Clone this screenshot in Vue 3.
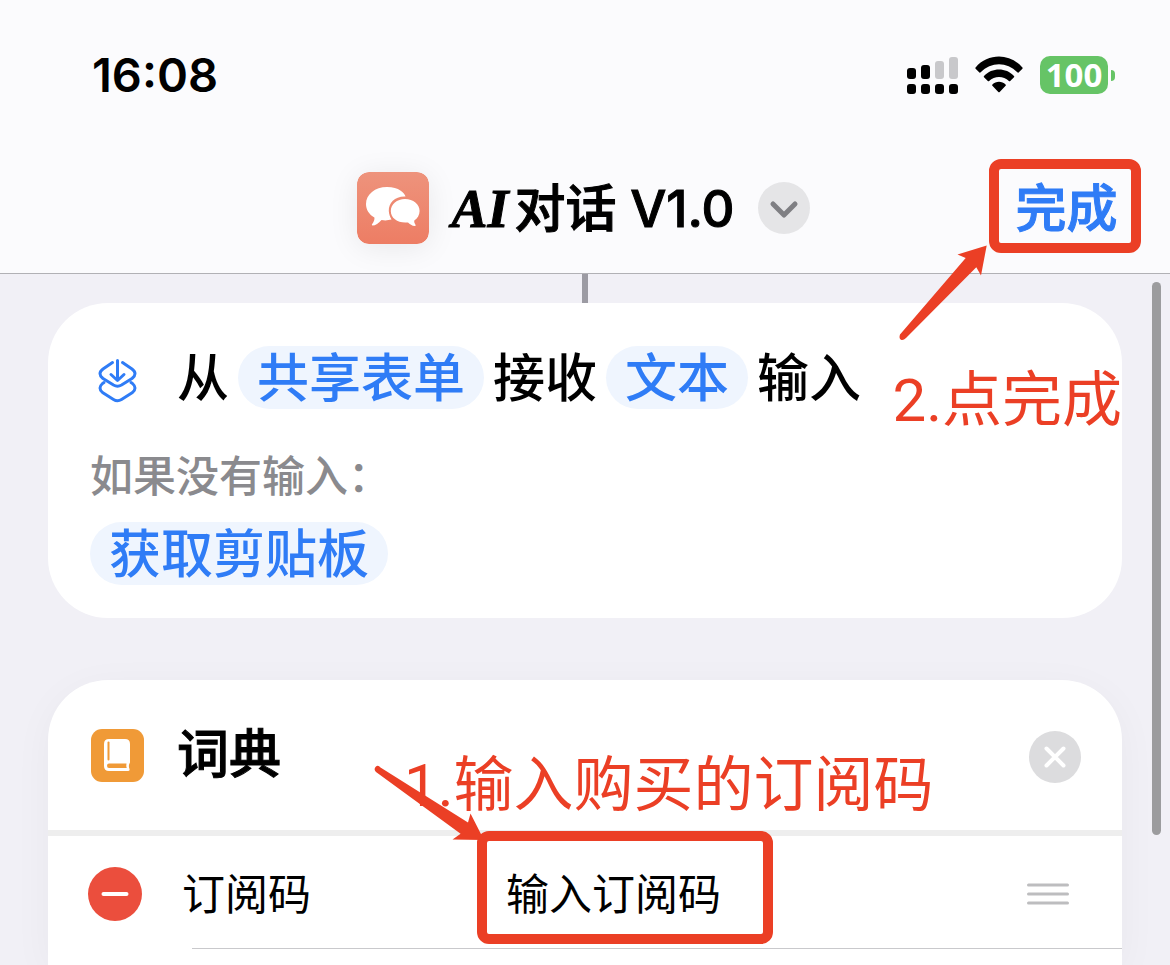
<template>
  <div class="screen">

    <header class="topbar">
      <!-- Status bar -->
      <div class="status">
        <span class="time">16:08</span>
        <div class="status-icons">
          <svg class="signal" width="52" height="38" viewBox="0 0 52 38">
            <rect x="0" y="12" width="9" height="11" rx="3" />
            <rect x="14" y="9" width="9" height="14" rx="3" />
            <rect class="off" x="28" y="5" width="9" height="18" rx="3" />
            <rect class="off" x="42" y="1" width="9" height="22" rx="3" />
            <rect v-for="x in [0, 14, 28, 42]" :key="x" :x="x" y="28" width="9" height="10" rx="3" />
          </svg>
          <svg class="wifi" width="48" height="38" viewBox="0 0 48 38">
            <path d="M0.6 11.4C13-3 35-3 47.4 11.4Q48 12 47.4 12.8L43.6 16.4Q43 17 42.3 16.3C32 5.600 16 5.600 5.700 16.300Q5 17 4.400 16.400L0.600 12.800Q0 12 0.600 11.400Z" />
            <path d="M9 20C17 11.400 31 11.400 39 20Q39.600 20.700 39 21.300L35.200 25Q34.600 25.600 33.900 25C28.500 19.500 19.500 19.500 14.100 25Q13.400 25.600 12.800 25L9 21.300Q8.400 20.700 9 20Z" />
            <path d="M17.400 28.400C21 24.800 27 24.800 30.600 28.400Q31.300 29.100 30.600 29.800L24.700 36Q24 36.700 23.300 36L17.400 29.800Q16.700 29.100 17.400 28.400Z" />
          </svg>
          <div class="battery">
            <span class="battery-level">100</span>
            <span class="battery-cap"></span>
          </div>
        </div>
      </div>

      <!-- Title -->
      <div class="titlebar">
        <div class="title">
          <svg class="app-icon" width="72" height="72" viewBox="0 0 72 72">
            <defs>
              <linearGradient id="coral" x1="0" y1="0" x2="0" y2="1">
                <stop offset="0" stop-color="#ee937c" />
                <stop offset="1" stop-color="#ed7d64" />
              </linearGradient>
            </defs>
            <rect width="72" height="72" rx="12" fill="url(#coral)" />
            <path fill="#fff" d="M30 15C42 15 47.500 21 48.500 24.500C38 24 31.500 31 31.800 39C32 42 33 45 34.500 47.600Q29 49 24.500 48C21.500 51.500 18.500 53.500 15.500 53.600Q14.200 53.400 15.200 52C17 49.500 17.700 47.500 17.400 45.500C12 42.500 9 37.500 9 32C9 22.500 18 15 30 15Z" />
            <path fill="#fff" d="M48 27C56.300 27 62.600 32.300 62.600 39C62.600 43 60.500 46.300 57.300 48.600C57 50.300 57.600 51.600 58.600 52.900Q59 54.100 57.800 54C55 53.600 52.800 52.300 51 50.400C41.500 51.600 33.800 46.500 33.800 39C33.800 32.300 40 27 48 27Z" />
          </svg>
          <h1 class="name"><i>AI</i>对话 V1.0</h1>
          <button class="round chevron" aria-label="展开">
            <svg width="52" height="52" viewBox="0 0 52 52">
              <path d="M15 22L26 33L37 22" />
            </svg>
          </button>
        </div>
        <button class="done">完成</button>
      </div>
    </header>

    <main class="content">
      <div class="connector"></div>

      <!-- Receive input -->
      <section class="card receive">
        <div class="sentence">
          <svg class="row-icon layers" width="54" height="54" viewBox="0 0 54 54">
            <path d="M22.500 11.500L13 18Q7 22.500 13 27.500L23.500 34Q27.500 36.300 31.500 34L42 27.500Q48 22.500 42 18L32.500 11.500" />
            <path d="M14 31.500L12.500 32.500Q7.500 37 12.500 41.500L23.500 48.500Q27.500 51 31.500 48.500L42.500 41.500Q47.500 37 42.500 32.500L41 31.500" />
            <path d="M27.500 9.500V29M21 23.500L27.500 29.500L34 23.500" />
          </svg>
          <span class="word">从</span>
          <button class="token">共享表单</button>
          <span class="word">接收</span>
          <button class="token">文本</button>
          <span class="word">输入</span>
        </div>
        <p class="hint">如果没有输入：</p>
        <button class="token">获取剪贴板</button>
        <span class="note note-done">2.点完成</span>
      </section>

      <!-- Dictionary -->
      <section class="card dictionary">
        <div class="card-head">
          <svg class="row-icon" width="54" height="54" viewBox="0 0 54 54">
            <rect x="1" y="1" width="53" height="53" rx="11" fill="#f09a37" />
            <path fill="#fff" d="M19 11H35Q40 11 40 16V34.500Q38 37.500 39.500 41Q40 43 38 43H19Q14 43 14 38V16Q14 11 19 11Z" />
            <path fill="none" stroke="#f09a37" stroke-width="2" stroke-linecap="round" d="M18.500 14.500V31.500" />
            <path fill="#f09a37" d="M19 35.500H36.500Q36 37.500 36.700 40H19Q17 40 17 37.800Q17 35.500 19 35.500Z" />
          </svg>
          <h2>词典</h2>
          <button class="round close" aria-label="关闭">
            <svg width="52" height="52" viewBox="0 0 52 52">
              <path d="M17.500 17.500L34.500 34.500M34.500 17.500L17.500 34.500" />
            </svg>
          </button>
        </div>
        <div class="entry">
          <button class="round remove" aria-label="删除">
            <svg width="54" height="54" viewBox="0 0 54 54">
              <path d="M15.500 27H38.500" />
            </svg>
          </button>
          <label for="code">{{ entryKey }}</label>
          <div class="field">
            <input id="code" v-model="code" type="text" />
            <span class="frame"></span>
          </div>
          <svg class="handle" width="42" height="22" viewBox="0 0 42 22">
            <path d="M1.500 2H40.500M1.500 11H40.500M1.500 20H40.500" />
          </svg>
        </div>
        <div class="divider"></div>
        <span class="note note-code">1.输入购买的订阅码</span>
        <svg class="arrow arrow-code" width="120" height="80" viewBox="0 0 120 80">
          <path d="M11.500 6.500Q9 3.500 6.500 6Q4.500 8.500 7 11L91.600 72.700L83.500 78.500L115 79L101.500 52.500L99 61.500Z" />
        </svg>
      </section>
    </main>

    <svg class="arrow arrow-done" width="100" height="104" viewBox="0 0 100 104">
      <path d="M11 93.500Q9.500 98.500 12.500 99Q14.500 99.500 17 97L87.300 26.300L92 34.500L97.700 4.500L68.500 13.500L76.700 17Z" />
    </svg>
    <div class="scrollbar"></div>
  </div>
</template>

<script setup>
import { ref } from 'vue'

const entryKey = '订阅码'
const code = ref('输入订阅码')
</script>

<style>
body { margin: 0; background: #f1f0f6; }
</style>

<style scoped>
.screen {
  position: relative;
  display: flex;
  flex-direction: column;
  min-height: 100vh;
  overflow: hidden;
  background: #f1f0f6;
  color: #000;
  font-family: Inter, "Noto Sans CJK SC", sans-serif;
  font-size: 52px;
  line-height: 60px;
  font-weight: 500;
}
.screen * { box-sizing: border-box; }

button {
  padding: 0;
  border: none;
  background: transparent;
  font: inherit;
  cursor: pointer;
}
h1, h2, p { margin: 0; }
svg { display: block; flex: none; }

/* top bar */
.topbar {
  padding: 48px 0 20px;
  background: #fbfbfd;
  border-bottom: 1px solid #b1b1b5;
}
.status {
  display: flex;
  justify-content: space-between;
  align-items: center;
  height: 54px;
  padding: 0 55px 0 92px;
}
.time { font-size: 47px; font-weight: 600; }
.status-icons { display: flex; align-items: center; }
.signal .off { fill: #c8c8cb; }
.wifi { margin: 0 17px 0 16px; }
.battery { display: flex; align-items: center; gap: 3px; }
.battery-level {
  width: 68px;
  border-radius: 10px;
  background: #66c466;
  color: #fff;
  font-family: "Noto Sans", sans-serif;
  font-size: 33px;
  line-height: 38px;
  font-weight: 700;
  text-align: center;
}
.battery-cap {
  width: 4px;
  height: 11px;
  border-radius: 0 5px 5px 0;
  background: #66c466;
}

.titlebar {
  display: grid;
  grid-template-columns: 1fr auto 1fr;
  align-items: center;
  margin-top: 57px;
  padding: 0 29px 0 25px;
}
.title {
  grid-column: 2;
  display: flex;
  align-items: center;
  gap: 23px;
  padding-top: 3px;
}
.app-icon {
  border-radius: 12px;
  box-shadow: 0 4px 30px rgba(0, 0, 0, 0.08);
}
.name {
  padding-top: 3px;
  font-size: 51px;
  font-weight: 500;
  -webkit-text-stroke: 1px #000;
  white-space: nowrap;
}
.name i {
  margin-right: 6px;
  font-family: "Liberation Serif", serif;
  font-size: 54px;
  font-weight: 700;
}
.done {
  justify-self: end;
  width: 152px;
  height: 94px;
  padding: 5px 0 0 3px;
  border: 10px solid #eb3f25;
  border-radius: 12px;
  color: #2f7cf6;
  font-size: 51px;
  -webkit-text-stroke: 1px #2f7cf6;
}

.round { border-radius: 50%; }
.round path {
  fill: none;
  stroke: #fff;
  stroke-width: 4;
  stroke-linecap: round;
  stroke-linejoin: round;
}
.chevron { background: #e5e5e7; }
.chevron path { stroke: #7f7f83; stroke-width: 5; }

/* cards */
.content {
  flex: 1;
  display: flex;
  flex-direction: column;
  padding: 0 48px;
}
.connector {
  align-self: center;
  width: 6px;
  height: 29px;
  background: #9c9ba3;
}
.card {
  position: relative;
  background: #fff;
  border-radius: 60px;
}
.receive {
  margin-bottom: 62px;
  padding: 43px 42px 33px;
}
.sentence {
  display: flex;
  align-items: center;
  gap: 9px;
  white-space: nowrap;
}
.row-icon { margin-right: 33px; }
.sentence .row-icon { margin-right: 24px; }
.layers path {
  fill: none;
  stroke: #2f7cf6;
  stroke-width: 3;
  stroke-linecap: round;
  stroke-linejoin: round;
}
.word { padding-top: 3px; }
.token {
  padding: 3px 19px 0;
  border-radius: 32px;
  background: #eff5fe;
  color: #2f7cf6;
  white-space: nowrap;
}
.hint {
  margin: 37px 0 16px;
  color: #8a8a8e;
  font-size: 43px;
}

.dictionary {
  flex: 1;
  border-radius: 60px 60px 0 0;
  box-shadow: 0 8px 40px rgba(0, 0, 60, 0.04);
}
.card-head {
  display: flex;
  align-items: center;
  height: 156px;
  padding: 0 41px 0 42px;
  border-bottom: 6px solid #eee;
}
.card-head h2 {
  flex: 1;
  font-size: 52px;
  font-weight: 500;
  -webkit-text-stroke: 1px #000;
}
.close { margin-top: 3px; background: #dcdcde; }
.entry {
  display: flex;
  align-items: center;
  height: 112px;
  padding: 3px 53px 0 40px;
  font-size: 43px;
  font-weight: 400;
}
.remove { margin-right: 40px; background: #eb4e3d; }
.entry label { width: 324px; }
.field {
  position: relative;
  flex: 1;
}
.field input {
  display: block;
  width: 100%;
  height: 60px;
  padding: 0;
  border: none;
  outline: none;
  background: transparent;
  color: #000;
  font: inherit;
}
.handle path {
  fill: none;
  stroke: #bdbdbf;
  stroke-width: 3;
  stroke-linecap: round;
}
.divider {
  height: 1px;
  margin-left: 144px;
  background: #c9c9cc;
}

/* annotations */
.frame {
  position: absolute;
  top: -33px;
  left: -29px;
  width: 296px;
  height: 113px;
  border: 10px solid #eb3f25;
  border-radius: 12px;
  pointer-events: none;
}
.note {
  position: absolute;
  color: #eb3f25;
  font-family: Roboto, "Noto Sans CJK SC", sans-serif;
  font-size: 60px;
  line-height: 80px;
  font-weight: 400;
  white-space: nowrap;
}
.note-done { top: 58px; right: 0; }
.note-code { top: 66px; left: 356px; }
.arrow { position: absolute; fill: #eb3f25; }
.arrow-code { top: 81px; left: 321px; }
.arrow-done { top: 241px; right: 181px; }

.scrollbar {
  position: absolute;
  top: 282px;
  right: 9px;
  width: 9px;
  height: 553px;
  border-radius: 5px;
  background: #9c9c9e;
}
</style>
